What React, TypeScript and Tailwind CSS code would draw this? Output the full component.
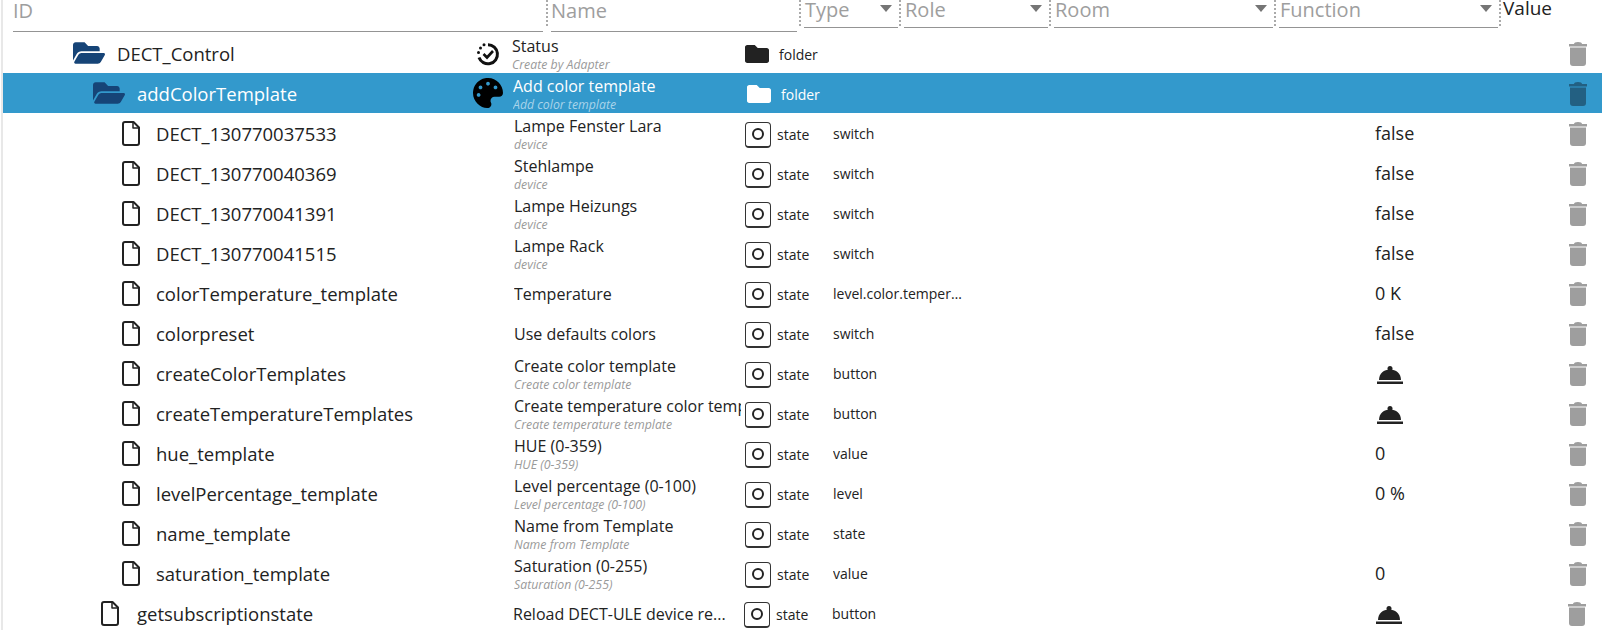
import { FaFolder, FaFolderOpen, FaPalette } from "react-icons/fa";

type Row = {
  id: string;
  name: string;
  sub?: string;
  kind?: string;
  role?: string;
  value?: string;
  bell?: boolean;
  clip?: boolean;
};

const children: Row[] = [
  { id: "DECT_130770037533", name: "Lampe Fenster Lara", sub: "device", role: "switch", value: "false" },
  { id: "DECT_130770040369", name: "Stehlampe", sub: "device", role: "switch", value: "false" },
  { id: "DECT_130770041391", name: "Lampe Heizungs", sub: "device", role: "switch", value: "false" },
  { id: "DECT_130770041515", name: "Lampe Rack", sub: "device", role: "switch", value: "false" },
  { id: "colorTemperature_template", name: "Temperature", role: "level.color.temperature", value: "0 K" },
  { id: "colorpreset", name: "Use defaults colors", role: "switch", value: "false" },
  { id: "createColorTemplates", name: "Create color template", sub: "Create color template", role: "button", bell: true },
  { id: "createTemperatureTemplates", name: "Create temperature color template", sub: "Create temperature template", role: "button", bell: true, clip: true },
  { id: "hue_template", name: "HUE (0-359)", sub: "HUE (0-359)", role: "value", value: "0" },
  { id: "levelPercentage_template", name: "Level percentage (0-100)", sub: "Level percentage (0-100)", role: "level", value: "0 %" },
  { id: "name_template", name: "Name from Template", sub: "Name from Template", role: "state" },
  { id: "saturation_template", name: "Saturation (0-255)", sub: "Saturation (0-255)", role: "value", value: "0" },
];

function FileIcon() {
  return (
    <svg width="18" height="25" viewBox="0 0 18 25" fill="none" stroke="#222" strokeWidth="2" strokeLinejoin="round" className="shrink-0">
      <path d="M3 1h8.5L17 6.5V22a2 2 0 0 1-2 2H3a2 2 0 0 1-2-2V3a2 2 0 0 1 2-2z" />
      <path d="M11 1v6h6" strokeWidth="1.5" />
    </svg>
  );
}

function StateIcon() {
  return (
    <div className="flex h-[26px] w-[26px] shrink-0 items-center justify-center rounded-[4px] border-[1.5px] border-b-2 border-[#333]">
      <div className="h-[12px] w-[12px] rounded-full border-2 border-[#222]" />
    </div>
  );
}

function TrashIcon({ selected }: { selected?: boolean }) {
  return (
    <svg width="18" height="24" viewBox="0 0 18 24" className={`mt-[2px] shrink-0 ${selected ? "fill-[#236082]" : "fill-[#9e9e9e]"}`}>
      <path d="M5 2Q5 0 9 0t4 2h5v2.5H0V2z" />
      <path d="M1 5.5h16V21a3 3 0 0 1-3 3H4a3 3 0 0 1-3-3z" />
    </svg>
  );
}

function BellIcon() {
  return (
    <svg width="26" height="18" viewBox="0 0 26 18" fill="#222" className="ml-[2px] mt-[2px]">
      <circle cx="13" cy="2.5" r="2.5" />
      <path d="M2 14C2 7.5 7 3.5 13 3.5S24 7.5 24 14z" />
      <rect x="0" y="15.5" width="26" height="2.5" />
    </svg>
  );
}

function StatusIcon() {
  return (
    <svg width="24" height="24" viewBox="0 0 24 24" fill="none" stroke="#111" className="shrink-0">
      <path d="M12 2.8a9.5 9.5 0 1 1-9 12.7" strokeWidth="3" />
      <path d="M7.5 12l3.5 3.5 6-6.5" strokeWidth="2.6" />
      <circle cx="2.5" cy="10.5" r="1.5" fill="#111" stroke="none" />
      <circle cx="4.5" cy="6" r="1.5" fill="#111" stroke="none" />
      <circle cx="8" cy="2.8" r="1.5" fill="#111" stroke="none" />
    </svg>
  );
}

function NameCell({ name, sub, clip, light }: { name: string; sub?: string; clip?: boolean; light?: boolean }) {
  return (
    <div className="min-w-0 flex-1 pr-[4px] pt-[3px]">
      <div className={`text-[16px] leading-[19px] ${clip ? "overflow-hidden whitespace-nowrap" : "truncate"}`}>{name}</div>
      {sub && (
        <div className={`mt-px truncate text-[12.3px] italic leading-[16px] ${light ? "text-[#a9d4ea]" : "text-[#9a9a9a]"}`}>{sub}</div>
      )}
    </div>
  );
}

function ValueCell({ row }: { row: Row }) {
  return (
    <div className="w-[194px] shrink-0 pt-px text-[18px]">
      {row.bell ? <BellIcon /> : row.value}
    </div>
  );
}

function StateRow({ row, last }: { row: Row; last?: boolean }) {
  return (
    <div className="flex h-10 items-center pr-[16px] text-[#222]">
      <div className={`flex shrink-0 items-center ${last ? "w-[510px] pl-[98px]" : "w-[511px] pl-[119px]"}`}>
        <FileIcon />
        <span className={`text-[18.5px] ${last ? "ml-[18px]" : "ml-[16px]"} pt-[2px]`}>{row.id}</span>
      </div>
      <div className="flex w-[231px] shrink-0 items-center">
        <NameCell name={row.name} sub={row.sub} clip={row.clip} />
      </div>
      <div className="flex w-[88px] shrink-0 items-center pt-[3px]">
        <StateIcon />
        <span className="ml-[6px] text-[14px]">state</span>
      </div>
      <div className="w-[542px] shrink-0">
        <div className="w-[132px] truncate pt-px text-[14px]">{row.role}</div>
      </div>
      <ValueCell row={row} />
      <TrashIcon />
    </div>
  );
}

function HeaderSelect({ label, width }: { label: string; width: string }) {
  return (
    <div className={`ml-[3px] mr-px flex h-[28px] shrink-0 items-start justify-between border-b border-[#949494] pl-px pr-[6px] ${width}`}>
      <span className="text-[20px] leading-[19px] text-[#9e9e9e]">{label}</span>
      <span className="mt-[5px] h-0 w-0 border-x-[6px] border-t-[7px] border-x-transparent border-t-[#757575]" />
    </div>
  );
}

function Sep() {
  return <div className="h-[26px] shrink-0 border-l-2 border-dotted border-[#aaa]" />;
}

export default function App() {
  return (
    <div className="h-[630px] w-[1602px] overflow-hidden bg-white font-['Open_Sans',sans-serif]">
      <div className="ml-px h-full border-l-2 border-[#e8e8e8]">
        <div className="flex h-[33px] items-start">
          <div className="ml-[10px] h-[32px] w-[530px] shrink-0 border-b border-[#949494] text-[20px] leading-[22px] text-[#9e9e9e]">ID</div>
          <div className="ml-[3px]"><Sep /></div>
          <div className="ml-[3px] h-[32px] w-[246px] shrink-0 border-b border-[#949494] text-[20px] leading-[22px] text-[#9e9e9e]">Name</div>
          <div className="ml-[2px]"><Sep /></div>
          <HeaderSelect label="Type" width="w-[94px]" />
          <Sep />
          <HeaderSelect label="Role" width="w-[144px]" />
          <Sep />
          <HeaderSelect label="Room" width="w-[219px]" />
          <Sep />
          <HeaderSelect label="Function" width="w-[219px]" />
          <Sep />
          <span className="ml-[2px] text-[19px] leading-[17px] text-[#222]">Value</span>
        </div>

        <div className="flex h-10 items-center pr-[16px] text-[#222]">
          <div className="flex w-[509px] shrink-0 items-center pl-[70px]">
            <FaFolderOpen size={32} color="#164477" className="shrink-0" />
            <span className="ml-[12px] pt-[2px] text-[18.5px]">DECT_Control</span>
            <span className="ml-auto mr-[12px] pt-[2px]"><StatusIcon /></span>
          </div>
          <div className="flex w-[233px] shrink-0 items-center">
            <NameCell name="Status" sub="Create by Adapter" />
          </div>
          <div className="flex w-[630px] shrink-0 items-center pt-[2px]">
            <FaFolder size={24} color="#222" />
            <span className="ml-[10px] text-[14px]">folder</span>
          </div>
          <div className="w-[194px] shrink-0" />
          <TrashIcon />
        </div>

        <div className="flex h-10 items-center bg-[#3399cc] pr-[16px] text-white">
          <div className="flex w-[510px] shrink-0 items-center pl-[90px]">
            <FaFolderOpen size={32} color="#164477" className="shrink-0" />
            <span className="ml-[12px] pt-[2px] text-[18.5px]">addColorTemplate</span>
            <span className="ml-auto mr-[10px]"><FaPalette size={30} color="#000" /></span>
          </div>
          <div className="flex w-[234px] shrink-0 items-center">
            <NameCell name="Add color template" sub="Add color template" light />
          </div>
          <div className="flex w-[628px] shrink-0 items-center pt-[2px]">
            <FaFolder size={24} color="#fff" />
            <span className="ml-[10px] text-[14px]">folder</span>
          </div>
          <div className="w-[194px] shrink-0" />
          <TrashIcon selected />
        </div>

        {children.map((row) => (
          <StateRow key={row.id} row={row} />
        ))}
        <StateRow
          row={{ id: "getsubscriptionstate", name: "Reload DECT-ULE device re...", role: "button", bell: true }}
          last
        />
      </div>
    </div>
  );
}
